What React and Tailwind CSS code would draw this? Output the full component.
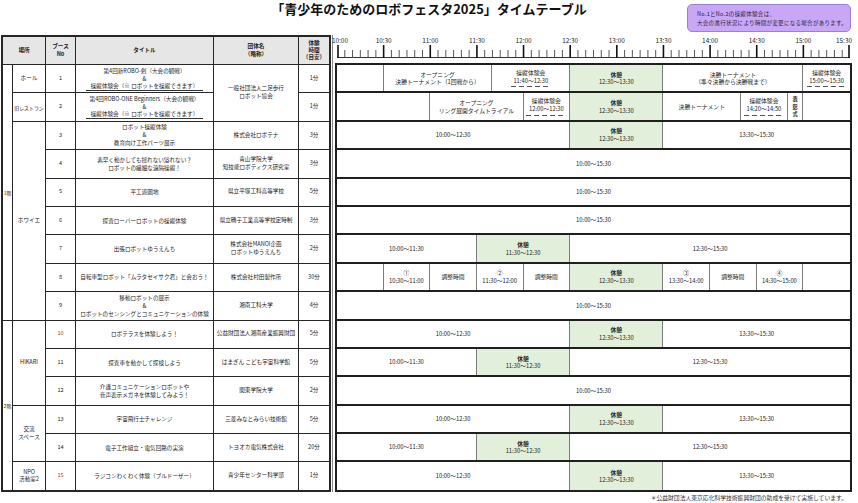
import React from 'react';

// time helpers: minutes counted from 10:00, the day runs 330 minutes
const DAY = 330;
const fmt = (m) => {
  const t = 600 + m;
  return `${Math.floor(t / 60)}:${String(t % 60).padStart(2, '0')}`;
};
const brk = (s, e) => ({ s, e, kind: 'break', lines: ['休憩', `${fmt(s)}～${fmt(e)}`] });
const span = (s, e, ...lines) => ({ s, e, lines });
const trial = (s, e) => ({ s, e, lines: ['操縦体験会'], dashed: `${fmt(s)}～${fmt(e)}` });

const lateLunch = [span(0, 150, '10:00～12:30'), brk(150, 210), span(210, 330, '13:30～15:30')];
const earlyLunch = [span(0, 90, '10:00～11:30'), brk(90, 150), span(150, 330, '12:30～15:30')];
const allDay = [span(0, 330, '10:00～15:30')];

const schedule = [
  [
    span(0, 30),
    span(30, 100, 'オープニング', '決勝トーナメント（1回戦から）'),
    trial(100, 150),
    brk(150, 210),
    span(210, 300, '決勝トーナメント', '（準々決勝から決勝戦まで）'),
    trial(300, 330),
  ],
  [
    span(0, 60),
    span(60, 120, 'オープニング', 'リング展開タイムトライアル'),
    trial(120, 150),
    brk(150, 210),
    span(210, 260, '決勝トーナメント'),
    trial(260, 290),
    { s: 290, e: 300, vertical: '表彰式' },
    span(300, 330),
  ],
  lateLunch,
  allDay,
  allDay,
  allDay,
  earlyLunch,
  [
    span(0, 30),
    span(30, 60, '①', '10:30～11:00'),
    span(60, 90, '調整時間'),
    span(90, 120, '②', '11:30～12:00'),
    span(120, 150, '調整時間'),
    brk(150, 210),
    span(210, 240, '③', '13:30～14:00'),
    span(240, 270, '調整時間'),
    span(270, 300, '④', '14:30～15:00'),
    span(300, 330),
  ],
  allDay,
  lateLunch,
  earlyLunch,
  allDay,
  lateLunch,
  earlyLunch,
  lateLunch,
];

const booths = [
  { no: '1', title: ['第4回新ROBO-剣（大会の観戦）', '&'], trial: true, time: '1分' },
  { no: '2', title: ['第4回ROBO-ONE Beginners（大会の観戦）', '&'], trial: true, time: '1分' },
  { no: '3', title: ['ロボット操縦体験', '&', '教育向け工作パーツ展示'], org: ['株式会社ロボテナ'], time: '3分' },
  { no: '4', title: ['素早く動かしても揺れない溢れない？', 'ロボットの繊細な遠隔操縦！'], org: ['青山学院大学', '知技能ロボティクス研究室'], time: '3分' },
  { no: '5', title: ['平工遊園地'], org: ['県立平塚工科高等学校'], time: '5分' },
  { no: '6', title: ['探査ローバーロボットの操縦体験'], org: ['県立磯子工業高等学校定時制'], time: '3分' },
  { no: '7', title: ['出張ロボットゆうえんち'], org: ['株式会社MANOI企画', 'ロボットゆうえんち'], time: '2分' },
  { no: '8', title: ['自転車型ロボット「ムラタセイサク君」と会おう！'], org: ['株式会社村田製作所'], time: '30分' },
  { no: '9', title: ['移動ロボットの展示', '&', 'ロボットのセンシングとコミュニケーションの体験'], org: ['湘南工科大学'], time: '4分' },
  { no: '10', red: true, title: ['ロボテラスを体験しよう！'], org: ['公益財団法人湘南産業振興財団'], time: '5分' },
  { no: '11', title: ['探査車を動かして探検しよう'], org: ['はまぎん こども宇宙科学館'], time: '5分' },
  { no: '12', title: ['介護コミュニケーションロボットや', '音声表示メガネを体験してみよう！'], org: ['関東学院大学'], time: '2分' },
  { no: '13', title: ['宇宙飛行士チャレンジ'], org: ['三菱みなとみらい技術館'], time: '5分' },
  { no: '14', title: ['電子工作組立・電気回路の実演'], org: ['トヨオカ電気株式会社'], time: '20分' },
  { no: '15', red: true, title: ['ラジコンわくわく体験（ブルドーザー）'], org: ['青少年センター科学部'], time: '1分' },
];

// place column: label and how many rows it covers
const places = {
  0: { label: ['ホール'], cls: '' },
  1: { label: ['旧レストラン'], cls: '', size: 'text-[4.9px] leading-[7px]' },
  2: { label: ['ホワイエ'], cls: 'row-span-7' },
  9: { label: ['HIKARI'], cls: 'row-span-3' },
  12: { label: ['交流', 'スペース'], cls: 'row-span-2' },
  14: { label: ['NPO', '活動室2'], cls: '' },
};

const Cell = ({ className = '', size = 'text-[5.6px] leading-[7.6px]', children }) => (
  <div className={`bg-white flex flex-col items-center justify-center text-center text-[#1d1d1d] ${size} ${className}`}>
    {children}
  </div>
);

const Head = ({ className = '', children }) => (
  <div className={`bg-[#e7e6e6] flex flex-col items-center justify-center text-center text-[5.6px] font-bold text-[#222] ${className}`}>
    {children}
  </div>
);

const Dashes = ({ w }) => (
  <div className={`mt-[2px] h-px bg-[repeating-linear-gradient(90deg,#555_0_5px,transparent_5px_8px)] ${w}`} />
);

function LeftTable() {
  const cells = [];
  booths.forEach((b, i) => {
    if (i === 0) cells.push(<Cell key="f1" size="text-[4.9px] leading-[7px]" className="row-span-9 whitespace-nowrap">1階</Cell>);
    if (i === 9) cells.push(<Cell key="f2" size="text-[4.9px] leading-[7px]" className="row-span-6 whitespace-nowrap">2階</Cell>);
    const p = places[i];
    if (p) {
      cells.push(
        <Cell key={`p${i}`} size={p.size} className={`whitespace-nowrap ${p.cls}`}>
          {p.label.map((l) => <span key={l}>{l}</span>)}
        </Cell>
      );
    }
    cells.push(
      <Cell key={`n${i}`} className={b.red ? 'text-[#a8392a]' : ''}>{b.no}</Cell>
    );
    cells.push(
      <Cell key={`t${i}`} size="text-[5.6px] leading-[8px]">
        {b.title.map((l, k) => <span key={k}>{l}</span>)}
        {b.trial && (
          <span className="border-b border-[#333] px-[5px] leading-[7px]">操縦体験会（※ ロボットを操縦できます）</span>
        )}
      </Cell>
    );
    if (i === 0) {
      cells.push(
        <Cell key="o0" className="row-span-2">
          <span>一般社団法人二足歩行</span>
          <span>ロボット協会</span>
        </Cell>
      );
    } else if (b.org) {
      cells.push(
        <Cell key={`o${i}`}>
          {b.org.map((l) => <span key={l}>{l}</span>)}
        </Cell>
      );
    }
    cells.push(<Cell key={`m${i}`}>{b.time}</Cell>);
  });

  return (
    <div className="ml-px w-[330px] grid grid-cols-[9px_32px_29px_137px_84px_30px] grid-rows-[27px_repeat(15,27.4px)] gap-px bg-[#262626] border-2 border-[#262626]">
      <Head className="col-span-2 leading-[7.6px]">場所</Head>
      <Head className="leading-[7.6px]">
        <span>ブース</span>
        <span>No</span>
      </Head>
      <Head className="leading-[7.6px]">タイトル</Head>
      <Head className="leading-[7.6px]">
        <span>団体名</span>
        <span>（略称）</span>
      </Head>
      <Head className="leading-[7.2px]">
        <span>体験</span>
        <span>時間</span>
        <span>（目安）</span>
      </Head>
      {cells}
    </div>
  );
}

function Axis() {
  const W = 513;
  const ticks = Array.from({ length: 67 }, (_, i) => i);
  const labels = Array.from({ length: 12 }, (_, i) => i);
  return (
    <div className="h-[28px] px-[2px]">
      <div className="relative h-full">
        {labels.map((i) => {
          const x = (i * 30 * W) / DAY;
          let style = { left: x, transform: 'translateX(-50%)' };
          if (i === 0) style = { left: -5 };
          if (i === 11) style = { right: -2 };
          return (
            <span key={i} style={style} className="absolute top-[2px] text-[6.4px] leading-[8px] text-[#222]">
              {fmt(i * 30)}
            </span>
          );
        })}
        <svg className="absolute left-0 top-[10px]" width={W} height="13" viewBox={`0 0 ${W} 13`}>
          <line x1="0" y1="12.5" x2={W} y2="12.5" stroke="#333" strokeWidth="1" />
          {ticks.map((i) => {
            const major = i % 6 === 0;
            const x = Math.min(Math.max((i * W) / 66, 1), W - 1);
            return (
              <line
                key={i}
                x1={x}
                x2={x}
                y1={major ? 0 : 5}
                y2="13"
                stroke={major ? '#111' : '#444'}
                strokeWidth={major ? 1.6 : 0.9}
              />
            );
          })}
        </svg>
      </div>
    </div>
  );
}

function Seg({ seg, last }) {
  const width = `${((seg.e - seg.s) / DAY) * 100}%`;
  const bg = seg.kind === 'break' ? 'bg-[#e2efda]' : 'bg-white';
  const line = last ? '' : 'border-r border-[#7c7c7c]';
  return (
    <div
      style={{ width }}
      className={`h-full shrink-0 flex flex-col items-center justify-center text-center text-[5.8px] leading-[7.6px] text-[#1d1d1d] ${bg} ${line}`}
    >
      {seg.vertical
        ? seg.vertical.split('').map((c, k) => (
            <span key={k} className="font-bold text-[5.2px] leading-[7.6px]">{c}</span>
          ))
        : seg.lines.map((l, k) => (
            <span key={k} className={seg.kind === 'break' && k === 0 ? 'font-bold' : ''}>{l}</span>
          ))}
      {seg.dashed && (
        <>
          <span>{seg.dashed}</span>
          <Dashes w="w-[40px]" />
        </>
      )}
    </div>
  );
}

function Timeline() {
  return (
    <div className="ml-px border-l border-[#8a8a8a] pl-[2px] w-[520px]">
      <Axis />
      <div className="w-[517px] border-2 border-[#1f1f1f]">
        {schedule.map((row, r) => (
          <div
            key={r}
            className={r === schedule.length - 1 ? 'flex h-[27.4px]' : 'flex h-[28.4px] border-b-2 border-[#1f1f1f]'}
          >
            {row.map((seg, k) => (
              <Seg key={k} seg={seg} last={k === row.length - 1} />
            ))}
          </div>
        ))}
      </div>
    </div>
  );
}

export default function App() {
  return (
    <div className="w-[858px] h-[503px] bg-white overflow-hidden text-[#1d1d1d] font-['Noto_Sans_CJK_JP','Noto_Sans',sans-serif]">
      <div className="grid grid-cols-[1fr_auto_1fr] h-[35px]">
        <div />
        <h1 className="pt-px text-[13px] leading-[15px] font-bold text-[#111]">「青少年のためのロボフェスタ2025」タイムテーブル</h1>
        <div className="flex justify-end items-start pt-[4px] pr-[7px]">
          <div className="w-[164px] h-[28px] rounded-[5px] border border-[#9a7fd6] bg-[#c8a7f6] pl-[9px] pt-[5px] text-[5.5px] leading-[9px] tracking-[0.3px] text-[#2a2340]">
            <p>No.1とNo.2の操縦体験会は、</p>
            <p>大会の進行状況により時間が変更になる場合があります。</p>
          </div>
        </div>
      </div>
      <div className="flex items-start">
        <LeftTable />
        <Timeline />
      </div>
      <p className="text-right pr-[11px] pt-[1px] text-[5.8px] leading-[9px] text-[#333]">
        ＊公益財団法人東京応化科学技術振興財団の助成を受けて実施しています。
      </p>
    </div>
  );
}
